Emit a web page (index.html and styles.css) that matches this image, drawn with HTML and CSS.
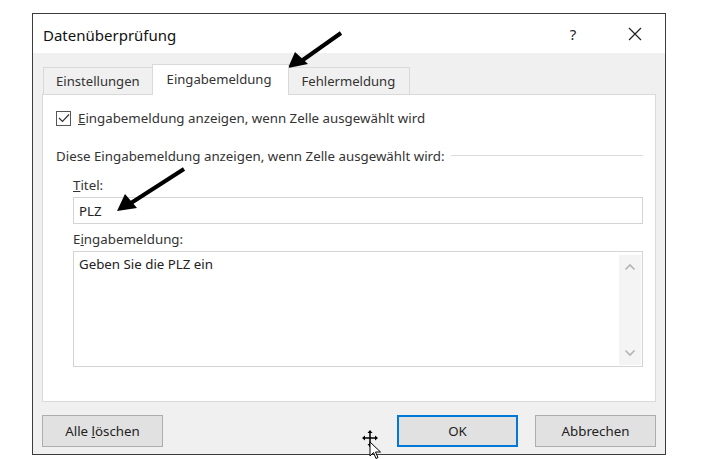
FILE: index.html
```html
<!DOCTYPE html>
<html lang="de">
<head>
    <meta charset="UTF-8">
    <title>Datenüberprüfung</title>
    <link rel="stylesheet" href="styles.css">
</head>
<body>
    <div class="dialog">
        <div class="titlebar">
            <span class="title">Datenüberprüfung</span>
            <span class="help">?</span>
            <span class="close">
                <svg width="14" height="14" viewBox="0 0 14 14"><path d="M1 1L13 13M13 1L1 13" stroke="#222" stroke-width="1.2"/></svg>
            </span>
        </div>

        <div class="dialog-body">
            <!-- Reiter -->
            <div class="tabs">
                <div class="tab">Einstellungen</div>
                <div class="tab active">Eingabemeldung</div>
                <div class="tab">Fehlermeldung</div>
            </div>

            <div class="panel">
                <label class="check-row">
                    <span class="checkbox">
                        <svg width="12" height="10" viewBox="0 0 12 10"><path d="M1 5l3.5 3.5L11 1.5" fill="none" stroke="#333" stroke-width="1.2"/></svg>
                    </span>
                    <span><u>E</u>ingabemeldung anzeigen, wenn Zelle ausgewählt wird</span>
                </label>

                <div class="group-label">
                    <span>Diese Eingabemeldung anzeigen, wenn Zelle ausgewählt wird:</span>
                    <span class="group-line"></span>
                </div>

                <div class="field">
                    <div class="field-label"><u>T</u>itel:</div>
                    <div class="input">PLZ</div>
                </div>

                <div class="field">
                    <div class="field-label">E<u>i</u>ngabemeldung:</div>
                    <div class="textarea">
                        <div class="textarea-text">Geben Sie die PLZ ein</div>
                        <div class="scrollbar">
                            <svg width="12" height="8" viewBox="0 0 12 8"><path d="M1.5 6.5L6 2l4.5 4.5" fill="none" stroke="#b4b4b4" stroke-width="1.6"/></svg>
                            <svg width="12" height="8" viewBox="0 0 12 8"><path d="M1.5 1.5L6 6l4.5-4.5" fill="none" stroke="#b4b4b4" stroke-width="1.6"/></svg>
                        </div>
                    </div>
                </div>
            </div>

            <div class="buttons">
                <button class="btn">Alle <u>l</u>öschen</button>
                <span class="spacer"></span>
                <button class="btn default">OK</button>
                <button class="btn">Abbrechen</button>
            </div>
        </div>
    </div>

    <!-- Hinweispfeile -->
    <svg class="arrow arrow-tab" width="60" height="42" viewBox="0 0 60 42">
        <path d="M55 3L14 32" stroke="#000" stroke-width="4"/>
        <path d="M2 38L9 22L22 34Z" fill="#000"/>
    </svg>
    <svg class="arrow arrow-title" width="76" height="50" viewBox="0 0 76 50">
        <path d="M71 3L18 37" stroke="#000" stroke-width="4"/>
        <path d="M4 45L12 28L24 42Z" fill="#000"/>
    </svg>

    <!-- Mauszeiger -->
    <svg class="cursor" width="22" height="30" viewBox="0 0 22 30">
        <path d="M8 1v16M1 8h14" stroke="#000" stroke-width="1.5"/>
        <path d="M8 0l-2.5 3h5zM8 17l-2.5-3h5zM0 8l3-2.5v5zM16 8l-3-2.5v5z" fill="#000"/>
        <path d="M8 12v14l3.5-3.5 2.5 6 2-1-2.5-5.5h5z" fill="#fff" stroke="#000" stroke-width="1"/>
    </svg>
</body>
</html>
```

FILE: styles.css
```css
body {
    margin: 0;
    background-color: #fff;
    font-family: 'Noto Sans', 'Open Sans', sans-serif;
    font-size: 13.3px;
    color: #222;
    position: relative;
    width: 701px;
    height: 459px;
    overflow: hidden;
}
.dialog {
    margin: 13px 0 0 32px;
    width: 632px;
    height: 440px;
    border: 1px solid #3c3c3c;
    display: flex;
    flex-direction: column;
}
.titlebar {
    height: 39px;
    background-color: #fff;
    display: flex;
    align-items: center;
    padding: 0 0 0 10px;
}
.title {
    font-size: 15px;
    color: #111;
    flex: 1;
    padding-top: 2px;
}
.help {
    font-size: 15px;
    width: 60px;
    text-align: center;
    margin-right: 2px;
}
.close {
    width: 60px;
    display: flex;
    justify-content: center;
}

/* Hauptbereich */
.dialog-body {
    flex: 1;
    background-color: #f0f0f0;
    padding: 0 9px 7px 9px;
    display: flex;
    flex-direction: column;
}
.tabs {
    display: flex;
    align-items: flex-end;
    height: 41px;
    padding-left: 1px;
}
.tab {
    height: 26px;
    padding: 0 12px;
    display: flex;
    align-items: center;
    border: 1px solid #d9d9d9;
    border-bottom: none;
    background-color: #f0f0f0;
    color: #333;
    font-size: 13.1px;
}
.tab + .tab {
    margin-left: -1px;
}
.tab.active {
    height: 31px;
    background-color: #fff;
    padding: 5px 16px 0 14px;
    position: relative;
    z-index: 1;
    margin-bottom: -1px;
    align-items: flex-start;
    box-sizing: border-box;
}
.tab:last-child {
    padding: 0 14px 0 13px;
}
.panel {
    height: 308px;
    background-color: #fff;
    border: 1px solid #d9d9d9;
    box-sizing: border-box;
    padding: 14px 12px 0 13px;
    line-height: 18px;
    color: #333;
}
.check-row {
    display: flex;
    align-items: center;
    gap: 7px;
}
.checkbox {
    width: 13px;
    height: 13px;
    border: 1px solid #555;
    display: flex;
    align-items: center;
    justify-content: center;
}
.group-label {
    display: flex;
    align-items: center;
    margin-top: 20px;
    padding-bottom: 4px;
}
.group-line {
    flex: 1;
    height: 1px;
    background-color: #dcdcdc;
    margin-left: 6px;
    margin-top: -2px;
}
.field {
    margin-left: 17px;
}
.field-label {
    margin-top: 7px;
    margin-bottom: 3px;
}
.field + .field .field-label {
    margin-top: 6px;
}
.input {
    height: 25px;
    border: 1px solid #d4d4d4;
    display: flex;
    align-items: center;
    padding-left: 5px;
    color: #222;
}
.textarea {
    height: 114px;
    border: 1px solid #d4d4d4;
    display: flex;
}
.textarea-text {
    flex: 1;
    padding: 3px 5px;
    color: #222;
}
.scrollbar {
    width: 22px;
    margin: 3px 1px 1px 0;
    background-color: #f4f4f4;
    display: flex;
    flex-direction: column;
    justify-content: space-between;
    align-items: center;
    padding: 8px 0;
    box-sizing: border-box;
}

/* Schaltflächen */
.buttons {
    display: flex;
    margin-top: auto;
    gap: 17px;
}
.spacer {
    flex: 1;
}
.btn {
    width: 121px;
    height: 32px;
    font-family: 'Noto Sans', 'Open Sans', sans-serif;
    font-size: 13.3px;
    color: #222;
    background-color: #e1e1e1;
    border: 1px solid #adadad;
}
.btn.default {
    border: 2px solid #0078d7;
}

/* Überlagerungen */
.arrow {
    position: absolute;
}
.arrow-tab {
    left: 286px;
    top: 30px;
}
.arrow-title {
    left: 113px;
    top: 166px;
}
.cursor {
    position: absolute;
    left: 362px;
    top: 430px;
}
```
